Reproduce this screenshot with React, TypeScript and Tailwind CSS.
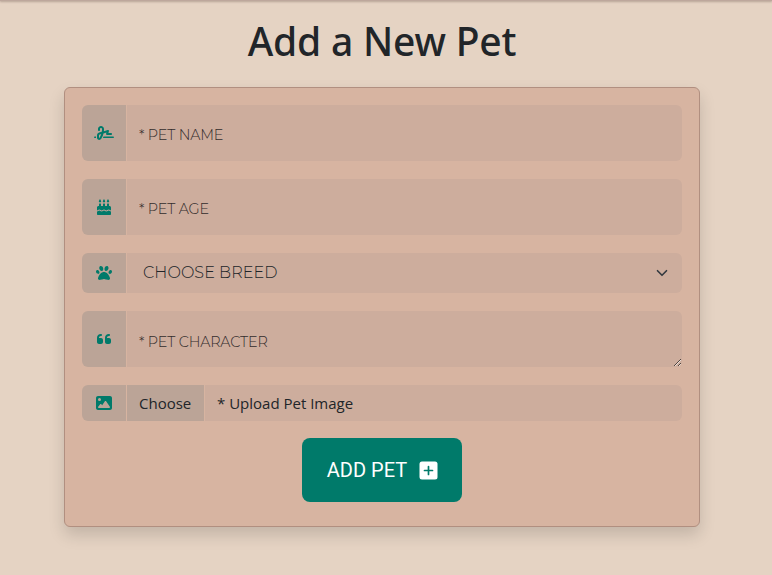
import type { ReactNode } from "react";
import { FaImage, FaPaw, FaQuoteLeft, FaSignature } from "react-icons/fa6";

const fieldText =
  "font-['Montserrat','Inter',sans-serif] font-light text-[14.4px] tracking-[-0.17px] text-[#332c2c] placeholder:text-[#332c2c] placeholder:opacity-100";

function CakeIcon() {
  return (
    <svg className="h-4 w-3.5" viewBox="0 0 448 512" fill="currentColor">
      <path d="M96 112c22 0 38-17 38-38S96 0 96 0 58 53 58 74s16 38 38 38zM224 112c22 0 38-17 38-38S224 0 224 0s-38 53-38 74 16 38 38 38zM352 112c22 0 38-17 38-38S352 0 352 0s-38 53-38 74 16 38 38 38z" />
      <path d="M64 224v-64c0-9 7-16 16-16h32c9 0 16 7 16 16v64h64v-64c0-9 7-16 16-16h32c9 0 16 7 16 16v64h64v-64c0-9 7-16 16-16h32c9 0 16 7 16 16v64h16c26 0 48 22 48 48v96c-28 0-31-32-74-32s-47 32-75 32-31-32-75-32-47 32-75 32-31-32-74-32-47 32-75 32v-96c0-26 22-48 48-48z" />
      <path d="M0 400c43 0 47-32 75-32s31 32 74 32 47-32 75-32 31 32 75 32 47-32 75-32 31 32 74 32v80c0 18-14 32-32 32H32c-18 0-32-14-32-32z" />
    </svg>
  );
}

function Row({ icon, height, children }: { icon: ReactNode; height: string; children: ReactNode }) {
  return (
    <div className={`flex w-full overflow-hidden rounded-md ${height}`}>
      <span className="flex w-[45px] shrink-0 items-center justify-center border-r border-[#d7b4a1] bg-[#bba497] text-base text-[#007a6a]">
        {icon}
      </span>
      {children}
    </div>
  );
}

export default function App() {
  return (
    <main className="h-[575px] overflow-hidden bg-[#e5d3c3] font-['Segoe_UI','Open_Sans',sans-serif] text-[#212529]">
      <div className="h-px bg-[#bda79c] shadow-[0_1px_2px_#a38f84]" />
      <h1 className="mt-[16px] mr-[8px] text-center font-['Segoe_UI','Noto_Sans',sans-serif] text-[39px] leading-[48px] font-medium tracking-[-0.2px]">
        Add a New Pet
      </h1>
      <form className="mt-[22px] ml-16 flex h-[440px] w-[636px] flex-col items-center rounded-md border border-[#b18f80] bg-[#d7b4a1] p-[17px] shadow-[0_8px_16px_rgba(0,0,0,0.15)]">
        <div className="flex w-full flex-col gap-[18px]">
          <Row height="h-14" icon={<FaSignature className="h-4 w-5" />}>
            <input className={`min-w-0 flex-1 bg-[#cdad9d] px-3 pt-1.5 outline-none ${fieldText}`} placeholder="* PET NAME" />
          </Row>
          <Row height="h-14" icon={<CakeIcon />}>
            <input className={`min-w-0 flex-1 bg-[#cdad9d] px-3 pt-1.5 outline-none ${fieldText}`} placeholder="* PET AGE" />
          </Row>
          <Row height="h-10" icon={<FaPaw />}>
            <div className="flex flex-1 items-center justify-between bg-[#cdad9d] pr-[14px] pl-4 font-['Montserrat','Inter',sans-serif] text-base font-light text-[#212529]">
              <span className="tracking-[0.05px]">CHOOSE BREED</span>
              <svg className="h-3 w-3" viewBox="0 0 16 16" fill="none" stroke="#343a40" strokeWidth="2.2" strokeLinecap="round" strokeLinejoin="round">
                <path d="m2 5 6 6 6-6" />
              </svg>
            </div>
          </Row>
          <Row height="h-14" icon={<FaQuoteLeft className="h-4 w-3.5" />}>
            <textarea className={`min-w-0 flex-1 resize-y overflow-hidden bg-[#cdad9d] px-3 pt-[21px] leading-[20px] outline-none ${fieldText}`} placeholder="* PET CHARACTER" />
          </Row>
          <Row height="h-9" icon={<FaImage />}>
            <span className="flex w-[78px] items-center border-r border-[#d7b4a1] bg-[#bba497] pl-3 text-[15px]">Choose</span>
            <span className="flex flex-1 items-center bg-[#cdad9d] pl-3 text-[15px]">* Upload Pet Image</span>
          </Row>
        </div>
        <button type="button" className="mt-[17px] flex h-16 w-40 shrink-0 items-center justify-center gap-3 rounded-lg bg-[#007a6a] pl-px font-['Roboto',sans-serif] text-xl text-white">
          ADD PET
          <svg className="h-[19px] w-[19px]" viewBox="0 0 19 19">
            <rect x="0.5" y="0.5" width="18" height="18" rx="2.5" fill="#fff" />
            <path d="M9.5 5.5v8M5.5 9.5h8" stroke="#007a6a" strokeWidth="1.7" strokeLinecap="round" />
          </svg>
        </button>
      </form>
    </main>
  );
}
